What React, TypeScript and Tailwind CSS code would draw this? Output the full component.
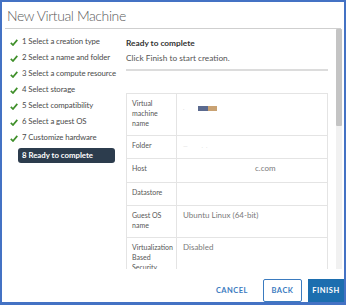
import React from 'react';

const steps = [
  '1 Select a creation type',
  '2 Select a name and folder',
  '3 Select a compute resource',
  '4 Select storage',
  '5 Select compatibility',
  '6 Select a guest OS',
  '7 Customize hardware',
];

const Check = () => (
  <svg width="8" height="7" viewBox="0 0 8 7" className="shrink-0">
    <path d="M0.8 3.8 L3 6 L7.3 0.9" fill="none" stroke="#3f8f2a" strokeWidth="1.7" />
  </svg>
);

const Row = ({ label, h, children }: { label: React.ReactNode; h: string; children?: React.ReactNode }) => (
  <div className={`flex border-b border-[#e4e4e4] ${h}`}>
    <div className="w-[50px] shrink-0 border-r border-[#e4e4e4] pl-[5px] pt-[4px] text-[7px] leading-[10px] text-[#565656] whitespace-nowrap">{label}</div>
    <div className="flex-1 px-[6px] pt-[4px] text-[8px] leading-[10px] text-[#7a7a7a]">{children}</div>
  </div>
);

export default function App() {
  return (
    <div className="w-[346px] h-[305px] bg-white border-[#4472c4] border-t-2 border-l-2 border-r-2 border-b-[3px] flex flex-col font-['Lato','Open_Sans',sans-serif] overflow-hidden">
      <div className="h-[27px] shrink-0 border-b border-[#cfcfcf] mx-[3px] px-[2px] flex items-center">
        <span className="text-[14px] text-[#5a5a5a] font-light tracking-[-0.4px]">New Virtual Machine</span>
      </div>
      <div className="flex flex-1 min-h-0">
        <div className="w-[116px] shrink-0 pt-[8px] pl-[8px] flex flex-col gap-[6px]">
          {steps.map((s) => (
            <div key={s} className="flex items-center gap-[4px] h-[10px] text-[7.8px] text-[#4a4a4a] whitespace-nowrap tracking-[-0.1px]">
              <Check />
              <span>{s}</span>
            </div>
          ))}
          <div className="ml-[8px] -mt-[1px] w-[97px] h-[15px] rounded-[3px] bg-[#2c3c4d] text-white text-[7.8px] font-bold flex items-center px-[4px] whitespace-nowrap">
            8 Ready to complete
          </div>
        </div>
        <div className="flex-1 flex min-w-0">
          <div className="flex-1 pl-[8px] pr-[8px] pt-[9px] overflow-hidden">
            <div className="text-[8.3px] font-bold text-[#333] leading-[10px]">Ready to complete</div>
            <div className="mt-[5px] text-[8.3px] text-[#555] leading-[10px]">Click Finish to start creation.</div>
            <div className="mt-[6px] border-b-2 border-[#dcdcdc]" />
            <div className="mt-[22px] border-t border-l border-r border-[#e4e4e4]">
              <Row label={<>Virtual<br />machine<br />name</>} h="h-[42px]">
                <div className="flex items-center mt-[5px]">
                  <span className="text-[#ccc] text-[6px] mr-[14px]">.</span>
                  <span className="w-[10px] h-[5px] bg-[#5b6a8f]" />
                  <span className="w-[9px] h-[5px] bg-[#c9a273]" />
                </div>
              </Row>
              <Row label="Folder" h="h-[23px]">
                <span className="text-[#d8d8d8] text-[6px]">—&nbsp;&nbsp;&nbsp;&nbsp;&nbsp;&nbsp;&nbsp;&nbsp;&nbsp;.&nbsp;&nbsp;.</span>
              </Row>
              <Row label="Host" h="h-[24px]">
                <div className="pl-[72px]">c.com</div>
              </Row>
              <Row label="Datastore" h="h-[23px]" />
              <Row label={<>Guest OS<br />name</>} h="h-[32px]">
                Ubuntu Linux (64-bit)
              </Row>
              <Row label={<>Virtualization<br />Based<br />Security</>} h="h-[42px]">
                Disabled
              </Row>
            </div>
          </div>
          <div className="w-[6px] shrink-0 bg-[#f1f1f1] mr-[2px] flex flex-col">
            <div className="h-[97px] bg-[#c4c4c4] rounded-[1px]" />
          </div>
        </div>
      </div>
      <div className="h-[33px] shrink-0 flex items-end justify-end">
        <button className="h-[23px] px-[4px] mr-[11px] text-[7.5px] font-bold tracking-[0.5px] text-[#3b7bbf]">CANCEL</button>
        <button className="h-[23px] w-[39px] border border-[#3b7bbf] rounded-[2px] text-[7.5px] font-bold tracking-[0.5px] text-[#3b7bbf]">BACK</button>
        <button className="h-[23px] w-[36px] ml-[6px] bg-[#1c6eaf] text-[7.5px] font-bold tracking-[0.5px] text-white">FINISH</button>
      </div>
    </div>
  );
}
